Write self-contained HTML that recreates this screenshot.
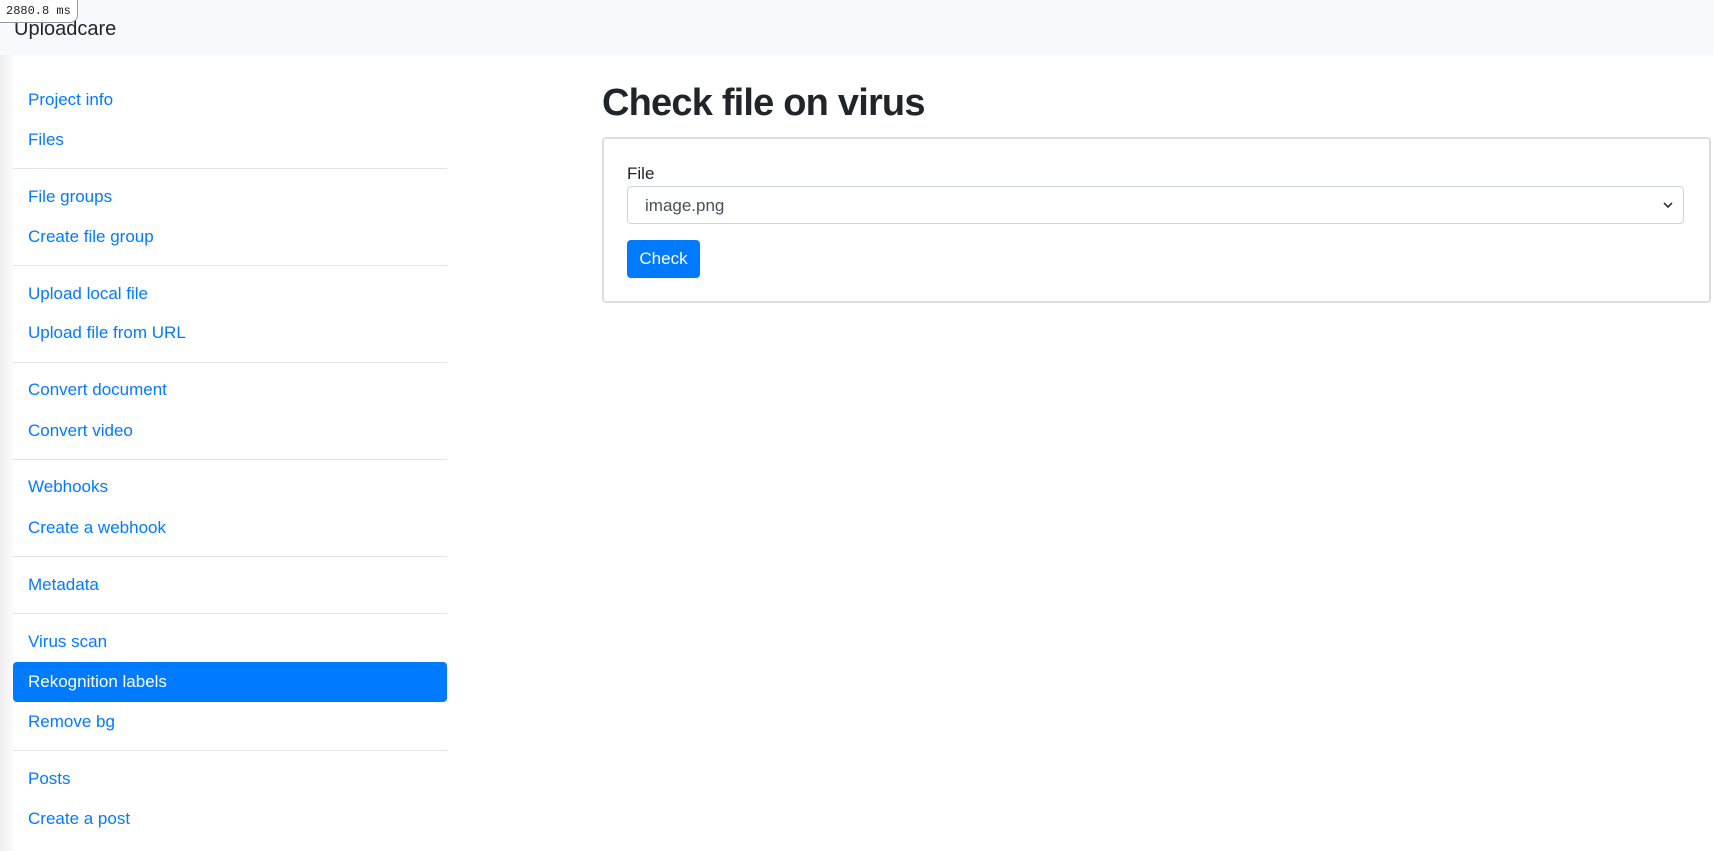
<!DOCTYPE html>
<html><head><meta charset="utf-8"><style>
body{margin:0;width:1714px;height:851px;overflow:hidden;background:#fff;font-family:"Liberation Sans",sans-serif;position:relative}
.hdr{position:absolute;left:0;top:0;width:1714px;height:55px;background:#f8f9fa}
.brand{position:absolute;left:14px;top:18px;font-size:20px;color:#212529}
.badge{position:absolute;left:0;top:0;font-family:"Liberation Mono",monospace;font-size:12px;background:#fff;border:1px solid #999;border-top:none;border-left:none;border-radius:0 0 8px 0;padding:4px 6px;color:#222}
.shadow{position:absolute;left:0;top:55px;width:16px;height:796px;background:linear-gradient(to right,#eee,#fff)}
.it{position:absolute;left:13px;width:434px;height:40px;line-height:40px;padding-left:15px;box-sizing:border-box;color:#007bff;font-size:17px}
.act{background:#007bff;color:#fff;border-radius:4px}
.hr{position:absolute;left:13px;width:434px;height:1px;background:#e3e3e3}
h1{position:absolute;left:602px;top:82px;margin:0;font-size:38px;letter-spacing:-0.8px;font-weight:bold;color:#212529}
.card{position:absolute;left:602px;top:137px;width:1109px;height:166px;border:2px solid #ddd;border-radius:4px;box-sizing:border-box}
.lbl{position:absolute;left:627px;top:164px;font-size:17px;color:#212529}
.sel{position:absolute;left:627px;top:186px;width:1057px;height:38px;border:1px solid #ced4da;border-radius:4px;box-sizing:border-box;font-size:17px;color:#495057;line-height:38px;padding-left:17px}
.sel svg{position:absolute;right:10px;top:14px}
.btn{position:absolute;left:627px;top:240px;width:73px;height:38px;background:#007bff;color:#fff;border-radius:4px;font-size:17px;line-height:38px;text-align:center}
</style></head><body>
<div class="hdr"></div><div class="brand">Uploadcare</div>
<div class="shadow"></div>
<div class="it" style="top:80px">Project info</div>
<div class="it" style="top:120px">Files</div>
<div class="hr" style="top:168px"></div>
<div class="it" style="top:177px">File groups</div>
<div class="it" style="top:217px">Create file group</div>
<div class="hr" style="top:265px"></div>
<div class="it" style="top:274px">Upload local file</div>
<div class="it" style="top:313px">Upload file from URL</div>
<div class="hr" style="top:362px"></div>
<div class="it" style="top:370px">Convert document</div>
<div class="it" style="top:411px">Convert video</div>
<div class="hr" style="top:459px"></div>
<div class="it" style="top:467px">Webhooks</div>
<div class="it" style="top:508px">Create a webhook</div>
<div class="hr" style="top:556px"></div>
<div class="it" style="top:565px">Metadata</div>
<div class="hr" style="top:613px"></div>
<div class="it" style="top:622px">Virus scan</div>
<div class="it act" style="top:662px">Rekognition labels</div>
<div class="it" style="top:702px">Remove bg</div>
<div class="hr" style="top:750px"></div>
<div class="it" style="top:759px">Posts</div>
<div class="it" style="top:799px">Create a post</div>
<h1>Check file on virus</h1>
<div class="card"></div>
<div class="lbl">File</div>
<div class="sel">image.png<svg width="10" height="8" viewBox="0 0 10 8"><path d="M1 2l4 4 4-4" fill="none" stroke="#333" stroke-width="1.6"/></svg></div>
<div class="btn">Check</div>
<div class="badge">2880.8 ms</div>
</body></html>
